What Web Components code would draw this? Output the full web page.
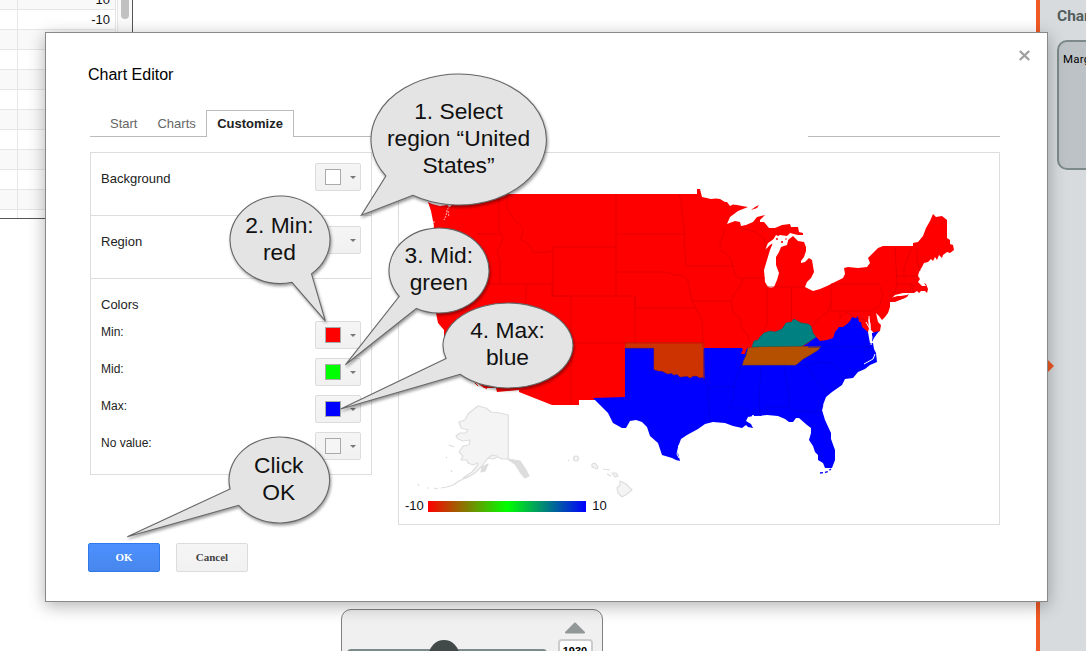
<!DOCTYPE html>
<html lang="en">
<head>
<meta charset="utf-8">
<title>Chart Editor</title>
<style>
html,body{margin:0;height:651px;overflow:hidden;background:#fff;font-family:"Liberation Sans",Arial,sans-serif;color:#222}
</style>
</head>
<body>
<app-page></app-page>
<script>
const define = (name, html, init) => {
  const template = document.createElement('template');
  template.innerHTML = html;
  customElements.define(name, class extends HTMLElement {
    connectedCallback() {
      if (this.shadowRoot) return;
      this.attachShadow({mode: 'open'}).append(template.content.cloneNode(true));
      if (init) init(this, this.shadowRoot);
    }
  });
};

define('data-sheet', `
<style>
:host{display:flex;box-sizing:border-box;width:133px;height:219px;border-right:1px solid #555;border-bottom:1px solid #555;overflow:hidden}
.rows{display:flex;flex-direction:column;width:116px;margin-top:-10px;flex:none}
.row{display:flex;flex:none;height:19px;border-bottom:1px solid #e6e6e6;font-size:13px;line-height:19px;color:#111}
.row:nth-child(odd){background:#f9f9f9}
.row i{width:17px;border-right:1px solid #e6e6e6}
.row b{flex:1;border-right:1px solid #e6e6e6;text-align:right;padding-right:5px;font-weight:400}
.bar{flex:1;background:#fafafa;border-left:1px solid #e6e6e6;margin-left:1px;display:flex;justify-content:center}
.thumb{width:8px;height:19px;border-radius:0 0 4px 4px;background:#c1c1c1}
</style>
<div class="rows"></div><div class="bar"><div class="thumb"></div></div>`,
(el, root) => {
  const rows = root.querySelector('.rows');
  for (let i = 0; i < 12; i++) {
    const r = document.createElement('div');
    r.className = 'row';
    r.innerHTML = '<i></i><b>' + (['10', '-10'][i] || '') + '</b>';
    rows.append(r);
  }
});

define('year-slider', `
<style>
:host{display:flex;box-sizing:border-box;width:262px;height:60px;border:1px solid #808080;border-radius:10px;background:#f0f0f0;justify-content:space-between;padding:0 9px 0 5px}
.track{position:relative;width:200px;height:8px;margin-top:39px;border-radius:4px;background:#7b8a8b}
.knob{position:absolute;left:82px;top:-9px;width:30px;height:30px;border-radius:50%;background:#414a49}
.spin{width:36px;display:flex;flex-direction:column;align-items:center}
svg{width:22px;height:12px;margin-top:12px;flex:none}
.num{box-sizing:border-box;width:35px;height:26px;flex:none;margin-top:5px;border:2.500px solid #ccc;border-radius:4px;background:#fff;font:700 11px/16px "Liberation Sans",sans-serif;padding-top:2px;text-align:center;color:#000}
</style>
<div class="track"><div class="knob"></div></div>
<div class="spin"><svg viewBox="0 0 22 12"><path d="M2 10.5 11 1.5 20 10.5Z" fill="#929797" stroke="#929797" stroke-width="2" stroke-linejoin="round"/></svg><div class="num">1930</div></div>`);

define('side-panel', `
<style>
:host{display:block;position:relative;box-sizing:border-box;width:50px;height:651px;overflow:hidden;border-left:4px solid #f15a24;background:#d7dbdd;padding-left:17px;font-family:Roboto,sans-serif}
h2{margin:6px 0 13px;font:700 15.500px/21px Roboto,sans-serif;color:#525e5e}
.card{box-sizing:border-box;width:160px;height:130px;border:2px solid #7d8a8a;border-radius:10px;background:#bdc2c6;padding:10px 0 0 4px;font:11.5px/14px Roboto,sans-serif;letter-spacing:.2px;color:#000}
svg{position:absolute;left:7px;top:359px;width:8px;height:14px}
</style>
<h2>Chart</h2><div class="card">Margin</div><svg viewBox="0 0 8 14"><path d="M0 0 7 7 0 14Z" fill="#f15a24"/></svg>`);

define('tab-bar', `
<style>
:host{display:flex;height:27px;margin-left:2px;width:910px;font-size:13px;line-height:27px;color:#666}
span{border-bottom:1px solid #bbb;box-sizing:border-box;height:27px}
.a{width:116px;padding-left:20px;display:flex;gap:20px}
.a b{font-weight:400}
.on{width:88px;border:1px solid #bbb;border-bottom:0;text-align:center;font-weight:700;color:#222;line-height:25px}
.gap{width:78px}.void{flex:1;border:0}.end{width:192px}
</style>
<span class="a"><b>Start</b><b>Charts</b></span><span class="on">Customize</span><span class="gap"></span><span class="void"></span><span class="end"></span>`);

define('color-picker', `
<style>
:host{display:flex;box-sizing:border-box;width:46px;height:28px;border:1px solid #dcdcdc;border-radius:2px;background:linear-gradient(#f5f5f5,#f1f1f1);align-items:center;padding-left:9px}
.sw{box-sizing:border-box;width:16px;height:16px;border:1px solid #aaa;background:var(--c)}
:host(:not([value])) .sw{visibility:hidden}
.ar{margin-left:9px;border:3px solid transparent;border-top-color:#777;border-bottom:0}
</style>
<div class="sw"></div><div class="ar"></div>`,
(el, root) => root.querySelector('.sw').style.setProperty('--c', el.getAttribute('value') || 'transparent'));

define('option-row', `
<style>
:host{display:flex;justify-content:space-between;align-items:flex-start;height:37px;padding:0 10px;font-size:12px;line-height:23px}
</style>
<slot name="label"></slot><slot></slot>`);

define('options-panel', `
<style>
:host{display:block;box-sizing:border-box;width:282px;height:323px;border:1px solid #ddd;color:#222}
section{box-sizing:border-box;height:63px;border-bottom:1px solid #ddd;padding-top:10px}
section:not(.colors) option-row{font-size:13px;line-height:31px}
.colors{border:0;height:auto;padding-top:15px}
h3{font-size:13px;font-weight:400;line-height:21px;margin:0 10px 6px}
</style>
<section><option-row><span slot="label">Background</span><color-picker value="#fff"></color-picker></option-row></section>
<section><option-row><span slot="label">Region</span><color-picker></color-picker></option-row></section>
<section class="colors"><h3>Colors</h3>
<option-row><span slot="label">Min:</span><color-picker value="#f00"></color-picker></option-row>
<option-row><span slot="label">Mid:</span><color-picker value="#0f0"></color-picker></option-row>
<option-row><span slot="label">Max:</span><color-picker value="#00f"></color-picker></option-row>
<option-row><span slot="label">No value:</span><color-picker value="#f5f5f5"></color-picker></option-row>
</section>`);

define('geo-map', `
<style>
:host{display:block;position:relative;box-sizing:border-box;width:602px;height:373px;border:1px solid #ddd}
svg{display:block;width:600px;height:371px}
.legend{position:absolute;left:6px;bottom:11px;display:flex;align-items:center;font-size:13px;line-height:14px;color:#111}
.grad{width:158px;height:11px;margin:0 6px 0 4.500px;background:linear-gradient(90deg,#f00,#0f0 50%,#00f)}
</style>
<svg viewBox="399 153 600 371">
<path fill="#f00" d="M428 202 432 204 440 206 447 205 450 207 453 203 455 194H697V189H700L702 197 711 199 716 198.500 720 199 725 202 727 202 730 206 733 204.500 737 205 742 206 748 207 738 211 730 217 727 224 735 221 740 222 741 226 746 225 753 222 757 217 765 215 760 220 760 222 764 222 769 228 775 228 782 225 790 224 791 227 798 227 799 232 803 233V235H798L790 233 787 236 780 235 775 238 771 241 768 243 765 250 770 245 773 243 770 250 767 260 764 270 765 282 768 287 771 288 774 287 777 280 779 273 776 265 776 257 779 252 781 247 787 245 788 240 793 236 798 241 804 242 806 247 806 251 804 257 801 261 801 263 805 262 809 258 812 260 814 272 811 278 807 282 805 287 813 291 820 289 827 286 833 283 843 278 845 274 844 268 848 267 858 268 867 267 870 263 868 258 873 253 878 248 883 246H913V243L918 242 923 236 926 228 930 221 933 214 936 217 942 216 947 220V238L950 240V244L953 245 954 250 950 253 947 252 943 255 942 258 939 255 937 260 935 257 933 261 931 259 928 262 924 263 922 267 919 272 918 276 920 279 918 282 922 286 926 286 924 283 926 284 928 289 927 293 925 291 921 291 919 293 917 291 914 293 903 293 895 295 892 298 898 296 905 296 909 294 907 297 895 302 890 301 890 307 888 313 885 317 882 320 879 316 876 313 878 322 881 325 880 331 875 334 871 330 871 324 868 318 869 328 865 345 740 360 704 400 593 400H579V405H552L519 392V390L497 392 496 388 484 388 476 382 469 371 452 362 444 346V330L438 323 436 313 425 285 428 250 434 226 431 211Z"/>
<path fill="#fff" d="M773 240 776 235 780 237 785 236 789 238 787 243 781 246 777 247 775 244 773 250 770 253 772 246Z"/>
<g fill="#f00"><circle cx="777" cy="239" r="1"/><circle cx="782" cy="242" r="1.1"/><circle cx="786" cy="239" r=".8"/><path d="M751 210 755 207 759 205 757 208 751 210M886 301 894 297 907 295 905 298 893 302 888 302Z"/></g>
<path fill="#00f" d="M593 398 625 397V348H743L802 347 808 343 816 337 820 341 827 340 833 338 835 332 839 327 843 327 847 324 850 321 852 317 855 318 858 316 859 322 861 322 862 327 868 332 869 338 870 343 873 343 874 349 876 353 877 362 870 365 865 369 858 372 853 378 845 379 842 385 832 392 826 397 823 405 822 410 825 420 831 433 831 439 835 450 835 460 832 468 825 468 823 463 818 460 818 455 815 452 813 446 809 440 811 433 811 428 807 425 799 418 796 418 793 422 789 422 785 419 778 416 767 415 757 416 753 415 748 417 746 421 751 424 753 428 748 427 746 425 742 428 733 426 725 423 713 422 705 424 698 429 687 435 681 439 678 447 678 453 680 461 676 460 672 458 662 455 658 443 650 436 647 427 642 422 636 420 630 421 626 428 622 428 613 423 608 413 600 405ZM872 333 879 331 874 338 872 342Z"/>
<path fill="#f00" d="M740 347H748L746 350 745 354 741 354 743 349Z"/>
<path fill="#c30" stroke="#a52a00" stroke-width=".6" d="M625.500 342.500H704V354L704.500 379 702 377 700 378 697 376 693 376 690 378 687 376 680 377 677 374 674 375 671 373 668 374 662 371 659 371 654 369.500V348H625.500Z"/>
<path fill="#b45000" stroke="#8d4900" stroke-width=".6" d="M748 348 762 346.500H821L818 350 810 355 803 359 796 365H742L744 360 746 356Z"/>
<path fill="#008080" stroke="#006c6c" stroke-width=".6" d="M752 347 754 341 758 340 760 337 764 333 770 331 775 332 782 329 786 323 791 322 794 319 801 323 808 324 811 326 813 333 816 337 807 343 802 346 762 346.500Z"/>
<g fill="none" stroke="#de0000" stroke-width=".8">
<path d="M499 194V229L503 238 497 253 500 260V284M507 194V207L512 217 519 224 523 229 521 240 528 243 534 253 546 252 553 251M476 234H499M553 247V296H635V343M616 194V296M552 247H616M488 284H553M526 285V318L573 362M552 284V296H571V405M571 343H704M617 234H684M679 194 681 202 682 212 685 234 684 240 686 265M617 272H667L674 275 682 275 688 281 692 301 699 314 702 320 703 348M686 266H733M692 301H731M635 308H697M635 296V308M733 266 729 256 720 250 720 244 725 229M741 228 755 232 764 238 766 250M733 266 735 276 742 279 742 284 735 292 731 301 733 311 741 319 741 327 747 334 750 343M742 278H765M767 288V324L761 335M767 287H805M791.500 287V322M831 284V301L828 312 817 320 812 328M831 284H879L883 294 880 305 871 311H831V301M840 311V318L847 312 854 317 865 320M870 313V330M895 247 896 264 897 284 895 292 889 297M912 247 904 268 904 276M917 243 917 262 920 271M897 276H918M895 284H913V292M911 284 910 292"/></g>
<g fill="none" stroke="#0000e0" stroke-width=".8"><path d="M704 349V379L708 387 709 412 711 421M708 387H734M743 362 738 373 734 385 734 397 729 408H747L748 416M761 366 759 400 760 416M784 365 789 396 789 407H767L767 414M789 407 795 411 821 412 823 405M796 365 804 364 810 370 817 382 829 393M806 366 818 362 834 364 848 378M808 347H870"/></g>
<path fill="none" stroke="#fff" stroke-width="1" d="M869 316 870 329 872 337 871 345M866 322 870 329M864 364 873 359 875 354M679 445 677 454 679 458"/>
<g fill="none" stroke="#fff" stroke-width=".7" stroke-dasharray="2 1"><path d="M450 205 447 210 446 216 444 220M448 211 449 217M434 221 434 224"/></g>
<g fill="none" stroke="#00f" stroke-width="1.3" stroke-dasharray="3 2"><path d="M820 473 827 472 831 469M749 416 756 415 764 415"/></g>
<path d="M475 383 478 386M484 387 487 389" stroke="#f00"/>
<g fill="#f4f4f4" stroke="#ddd" stroke-width="1.200" stroke-linejoin="round">
<path d="M508.300 415V459L502 459 498 457 493 459 488 458 482 466 475 473 468 477 463 478 472 472 477 466 478 463 473 465 468 463 467 460 461 460 463 456 459 452 463 446 469 445 470 440 463 441 458 439 456 436 460 433 466 433 468 430 461 428 459 422 465 420 468 414 474 409 478 406 486 408 491 412 500 413Z"/>
<path fill="#ddd" d="M508 459 514 460 520 461 526 470 529 476 525 478 520 472 515 464 509 460Z"/>
<path fill="#ddd" d="M482 467 488 464 485 471 481 472Z"/>
<path fill="none" d="M468 477 459 481 453 485 447 487 441 488M438 489 434 488M429 488 427 488M419 486 418 484M452 472 451 470M447 458 446 457M449 445 454 447M488 458 492 455 497 456"/>
<circle cx="576" cy="458.500" r="2.500"/><path d="M568 460 569 461M592 464 595 463 598 467 597 469 592 467ZM603 469 610 470M612 473 616 473 618 476 615 477ZM607 474 611 476M620 481 626 484 632 490 627 494 622 497 618 493 617 488 620 485Z"/></g>
</svg>
<div class="legend">-10<div class="grad"></div>10</div>`);

define('push-button', `
<style>
:host{display:block;box-sizing:border-box;width:72px;height:29px;border:1px solid #dcdcdc;border-radius:2px;background:linear-gradient(#f5f5f5,#f1f1f1);font:700 11px/27px "Liberation Serif",serif;text-align:center;color:#444}
:host([primary]){border-color:#3079ed;background:linear-gradient(#4d90fe,#4787ed);color:#fff}
</style><slot></slot>`);

define('chart-dialog', `
<style>
:host{display:block;position:relative;box-sizing:border-box;width:1003px;height:570px;border:1px solid #888;background:#fff;box-shadow:0 4px 16px rgba(0,0,0,.3);padding:32px 42px 0}
h1{font-size:16px;font-weight:400;line-height:20px;margin:0 0 25px;color:#000}
.body{display:flex;gap:26px;margin:15px 0 0 2px}
.foot{display:flex;gap:16px;margin-top:18px}
.close{position:absolute;right:16px;top:16px;width:13px;height:13px}
</style>
<svg class="close" viewBox="0 0 13 13"><path d="M1.800 2 11.200 11M11.200 2 1.800 11" stroke="#a0a0a0" stroke-width="2.300"/></svg>
<h1>Chart Editor</h1>
<tab-bar></tab-bar>
<div class="body"><options-panel></options-panel><geo-map></geo-map></div>
<div class="foot"><push-button primary>OK</push-button><push-button>Cancel</push-button></div>`);

/* box = "cx cy rx ry"; tail = start, tip, end in page coordinates, clockwise body. */
define('speech-callout', `
<style>
:host{position:absolute;display:flex;align-items:center;justify-content:center;text-align:center;font-size:22.800px;line-height:27px;color:#111;white-space:pre-line}
svg{position:absolute;inset:0;width:100%;height:100%;overflow:visible;filter:drop-shadow(1px 2px 1.500px rgba(0,0,0,.4))}
div{position:relative;left:-.5px;top:-1px}
</style>
<svg><path fill="#e4e4e4" stroke="#666" stroke-width="1.100"/></svg><div><slot></slot></div>`,
(el, root) => {
  const [cx, cy, rx, ry] = el.getAttribute('box').split(' ').map(Number);
  const t = el.getAttribute('tail').split(' ').map(Number);
  const left = cx - rx, top = cy - ry;
  Object.assign(el.style, {left: left + 'px', top: top + 'px', width: 2 * rx + 'px', height: 2 * ry + 'px'});
  /* The tail's roots are moved along their radius onto the ellipse. */
  const rim = i => {
    const u = (t[i] - cx) / rx, v = (t[i + 1] - cy) / ry, k = Math.hypot(u, v);
    return (rx + rx * u / k) + ' ' + (ry + ry * v / k);
  };
  root.querySelector('path').setAttribute('d', `M${rim(0)}A${rx} ${ry} 0 1 1 ${rim(4)}L${t[2] - left} ${t[3] - top}Z`);
});

define('app-page', `
<style>
:host{display:block;position:relative;width:1086px;height:651px;overflow:hidden}
.back{display:flex;justify-content:space-between;height:651px}
year-slider{align-self:flex-start;margin:609px 225px 0 0}
chart-dialog{position:absolute;left:45px;top:32px}
</style>
<div class="back"><data-sheet></data-sheet><year-slider></year-slider><side-panel></side-panel></div>
<chart-dialog></chart-dialog>
<speech-callout box="459 139 87.700 65.500" tail="385.700 175.700 361.700 214.700 412.700 195.300">1. Select
region “United
States”</speech-callout>
<speech-callout box="280 240 50 43.800" tail="292 282.700 325.300 321 311.700 274.300">2. Min:
red</speech-callout>
<speech-callout box="439.300 270 50 42.500" tail="399.300 296 345.700 364.300 416.700 308">3. Mid:
green</speech-callout>
<speech-callout box="508 345.200 65 42.500" tail="446 358.300 340.700 408.700 460 374">4. Max:
blue</speech-callout>
<speech-callout box="279.300 480 50.300 43" tail="230 489 127.300 536.700 238.700 505.300">Click
OK</speech-callout>`);
</script>
</body>
</html>
